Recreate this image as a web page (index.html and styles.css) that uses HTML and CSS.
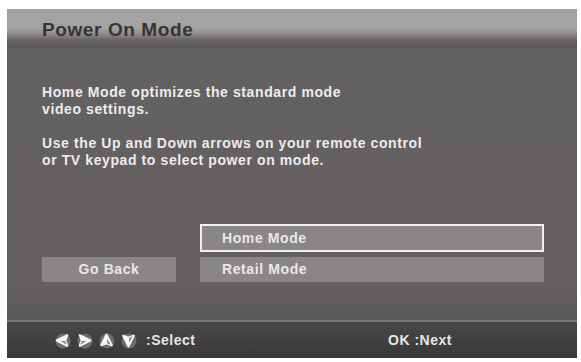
FILE: index.html
```html
<!DOCTYPE html>
<html>
<head>
<meta charset="utf-8">
<link rel="stylesheet" href="styles.css">
</head>
<body>
<div class="panel">
  <div class="header"><span class="title">Power On Mode</span></div>
  <div class="content">
    <p class="desc">Home Mode optimizes the standard mode<br>video settings.</p>
    <p class="desc">Use the Up and Down arrows on your remote control<br>or TV keypad to select power on mode.</p>
    <div class="choices">
      <div class="back-col"><div class="btn back">Go Back</div></div>
      <div class="mode-col">
        <div class="btn mode selected">Home Mode</div>
        <div class="btn mode">Retail Mode</div>
      </div>
    </div>
  </div>
  <div class="footer">
    <div class="nav">
      <svg class="key" viewBox="0 0 16 16"><circle cx="8.5" cy="8.5" r="7" fill="#6f6c6d"/><path d="M2.5 8 L12.5 3 L10.5 8 L12.5 13 Z" fill="#f4f4f4" stroke="#f4f4f4" stroke-width="2" stroke-linejoin="round"/><path d="M6 8.5 L10.5 8.5 L12 12 Z" fill="#8a8788"/></svg>
      <svg class="key" viewBox="0 0 16 16"><circle cx="8.5" cy="8.5" r="7" fill="#6f6c6d"/><path d="M13.5 8 L3.5 3 L5.5 8 L3.5 13 Z" fill="#f4f4f4" stroke="#f4f4f4" stroke-width="2" stroke-linejoin="round"/><path d="M10 8.5 L5.5 8.5 L4 12 Z" fill="#8a8788"/></svg>
      <svg class="key" viewBox="0 0 16 16"><circle cx="8.5" cy="8.5" r="7" fill="#6f6c6d"/><path d="M8 2.5 L3 12.5 L8 10.5 L13 12.5 Z" fill="#f4f4f4" stroke="#f4f4f4" stroke-width="2" stroke-linejoin="round"/><path d="M8.5 6 L8.5 10.5 L12 12 Z" fill="#8a8788"/></svg>
      <svg class="key" viewBox="0 0 16 16"><circle cx="8.5" cy="8.5" r="7" fill="#6f6c6d"/><path d="M8 13.5 L3 3.5 L8 5.5 L13 3.5 Z" fill="#f4f4f4" stroke="#f4f4f4" stroke-width="2" stroke-linejoin="round"/><path d="M8.5 10 L8.5 5.5 L12 4 Z" fill="#8a8788"/></svg>
      <span class="hint">:Select</span>
    </div>
    <span class="hint ok">OK :Next</span>
  </div>
</div>
</body>
</html>
```
FILE: styles.css
```css
html, body {
  margin: 0;
  padding: 0;
  background: #ffffff;
}
body {
  padding: 9px 4px 4px 7px;
  font-family: "Liberation Sans", Arial, sans-serif;
  font-weight: bold;
}
.panel {
  width: 570px;
  height: 349px;
  display: flex;
  flex-direction: column;
  background: #646061;
}
.header {
  height: 39px;
  box-sizing: border-box;
  padding: 10px 0 0 35px;
  background: linear-gradient(#a2a2a2 0%, #a3a3a3 48%, #8e8b8c 64%, #666263 80%, #5c5859 100%);
}
.title {
  font-size: 19px;
  line-height: 22px;
  color: #363435;
  letter-spacing: 0.6px;
}
.content {
  flex: 1;
  padding: 36px 0 0 35px;
  color: #ececec;
  font-size: 14px;
  line-height: 17px;
  letter-spacing: 0.6px;
  background: linear-gradient(#636061 0%, #656162 85%, #5c595a 100%);
}
.desc {
  margin: 0 0 17px 0;
}
.choices {
  display: flex;
  align-items: flex-end;
  gap: 24px;
  margin-top: 55px;
}
.back-col {
  width: 134px;
}
.mode-col {
  display: flex;
  flex-direction: column;
  gap: 5px;
  width: 344px;
}
.btn {
  height: 25px;
  box-sizing: border-box;
  background: #8a8687;
  color: #e8e8e8;
  font-size: 14px;
  line-height: 25px;
}
.back {
  text-align: center;
}
.mode {
  padding-left: 22px;
}
.selected {
  height: 28px;
  border: 2px solid #f2f2f2;
  line-height: 24px;
  padding-left: 20px;
}
.footer {
  height: 38px;
  box-sizing: border-box;
  border-top: 2px solid #7b7879;
  background: linear-gradient(#4a4748, #3b3839);
  display: flex;
  align-items: center;
  padding: 0 0 0 47px;
}
.nav {
  display: flex;
  align-items: center;
  gap: 5px;
  width: 334px;
}
.key {
  width: 17px;
  height: 17px;
  flex: none;
}
.hint {
  color: #e6e6e6;
  font-size: 14px;
  letter-spacing: 0.5px;
}
.nav .hint {
  margin-left: 4px;
}
```
